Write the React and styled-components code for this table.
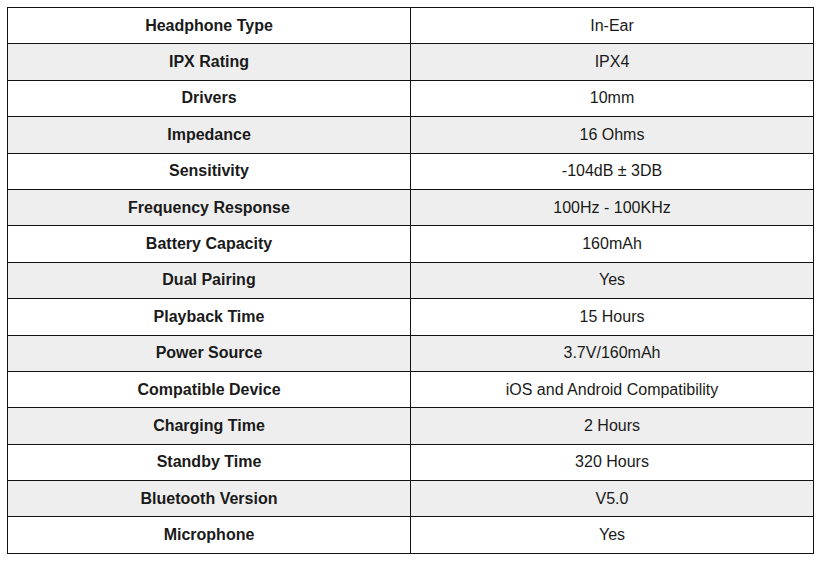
import styled, { createGlobalStyle } from "styled-components";

const specs = [
  ["Headphone Type", "In-Ear"],
  ["IPX Rating", "IPX4"],
  ["Drivers", "10mm"],
  ["Impedance", "16 Ohms"],
  ["Sensitivity", "-104dB ± 3DB"],
  ["Frequency Response", "100Hz - 100KHz"],
  ["Battery Capacity", "160mAh"],
  ["Dual Pairing", "Yes"],
  ["Playback Time", "15 Hours"],
  ["Power Source", "3.7V/160mAh"],
  ["Compatible Device", "iOS and Android Compatibility"],
  ["Charging Time", "2 Hours"],
  ["Standby Time", "320 Hours"],
  ["Bluetooth Version", "V5.0"],
  ["Microphone", "Yes"],
];

export default function App() {
  return (
    <>
      <GlobalStyle />
      <Page>
        <SpecTable>
          <colgroup>
            <col style={{ width: "50%" }} />
            <col style={{ width: "50%" }} />
          </colgroup>
          <tbody>
            {specs.map(([label, value], index) => (
              <Row key={label} $shaded={index % 2 === 1}>
                <Label>{label}</Label>
                <Value>{value}</Value>
              </Row>
            ))}
          </tbody>
        </SpecTable>
      </Page>
    </>
  );
}

const GlobalStyle = createGlobalStyle`
  body {
    margin: 0;
    background: #ffffff;
    font-family: "Liberation Sans", Arial, sans-serif;
  }
`;

const Page = styled.div`
  padding: 7px;
`;

const SpecTable = styled.table`
  width: 807px;
  border-collapse: collapse;
  table-layout: fixed;
  font-size: 16px;
  color: #1a1a1a;
`;

const Row = styled.tr`
  height: 36.4px;
  background-color: ${(p) => (p.$shaded ? "#eeeeee" : "#ffffff")};
`;

const Label = styled.td`
  border: 1px solid #111;
  text-align: center;
  font-weight: bold;
  padding: 0;
`;

const Value = styled.td`
  border: 1px solid #111;
  text-align: center;
  padding: 0;
`;
